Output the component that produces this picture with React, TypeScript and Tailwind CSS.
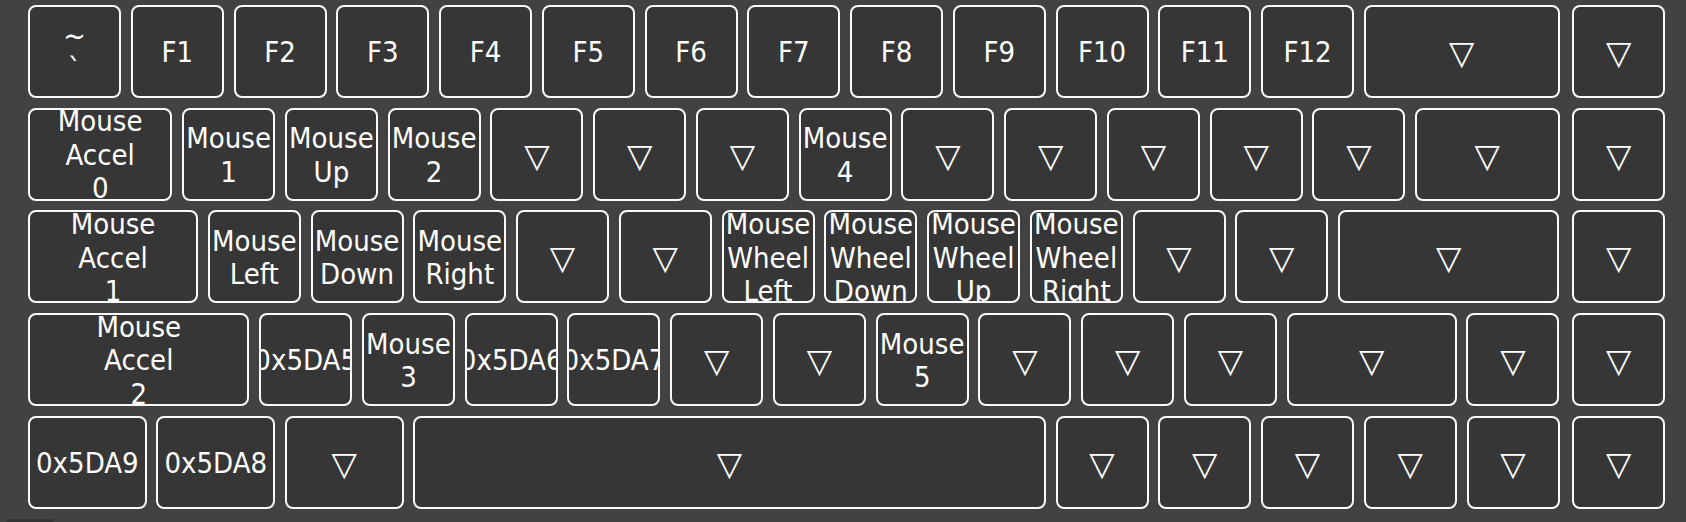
import React from "react";

type K = { l?: string[]; w?: string; last?: boolean };

const KW: Record<string, string> = {
  "1": "w-[93px]",
  "1.25": "w-[118.69px]",
  "1.5": "w-[144.38px]",
  "1.75": "w-[170.06px]",
  "2": "w-[195.75px]",
  "2.25": "w-[221.44px]",
  "6.25": "w-[632.44px]",
};

const t = (s: string): K => ({ l: s.split(" ") });
const tri = (w = "1", last = false): K => ({ w, last });

const rows: K[][] = [
  [
    { l: ["~", "`"] },
    t("F1"), t("F2"), t("F3"), t("F4"), t("F5"), t("F6"),
    t("F7"), t("F8"), t("F9"), t("F10"), t("F11"), t("F12"),
    tri("2"), tri("1", true),
  ],
  [
    { l: ["Mouse", "Accel", "0"], w: "1.5" },
    t("Mouse 1"), t("Mouse Up"), t("Mouse 2"),
    tri(), tri(), tri(),
    t("Mouse 4"),
    tri(), tri(), tri(), tri(), tri(),
    tri("1.5"), tri("1", true),
  ],
  [
    { l: ["Mouse", "Accel", "1"], w: "1.75" },
    t("Mouse Left"), t("Mouse Down"), t("Mouse Right"),
    tri(), tri(),
    t("Mouse Wheel Left"), t("Mouse Wheel Down"), t("Mouse Wheel Up"), t("Mouse Wheel Right"),
    tri(), tri(),
    tri("2.25"), tri("1", true),
  ],
  [
    { l: ["Mouse", "Accel", "2"], w: "2.25" },
    t("0x5DA5"), t("Mouse 3"), t("0x5DA6"), t("0x5DA7"),
    tri(), tri(),
    t("Mouse 5"),
    tri(), tri(), tri(),
    tri("1.75"), tri(), tri("1", true),
  ],
  [
    { l: ["0x5DA9"], w: "1.25" },
    { l: ["0x5DA8"], w: "1.25" },
    tri("1.25"),
    tri("6.25"),
    tri(), tri(), tri(), tri(), tri(), tri("1", true),
  ],
];

function Key({ k }: { k: K }) {
  const w = KW[k.w ?? "1"];
  const tilde = k.l && k.l[0] === "~";
  return (
    <div
      className={
        "h-[93px] shrink-0 rounded-[8px] border-2 border-[#fafafa] bg-[#363636] overflow-hidden flex flex-col items-center justify-center text-white " +
        w +
        (k.last ? " ml-[3px]" : "")
      }
    >
      {k.l ? (
        <div className="flex flex-col items-center pt-[3px]">
          {k.l.map((s, i) => (
            <div
              key={i}
              className={
                "whitespace-nowrap " +
                (tilde ? "text-[30px] leading-[34px]" : "text-[29px] leading-[33.5px]")
              }
            >
              {s}
            </div>
          ))}
        </div>
      ) : (
        <span className="whitespace-nowrap text-[33px] leading-none font-['DejaVu_Sans',sans-serif] [font-stretch:normal] pt-[2px]">
          ▽
        </span>
      )}
    </div>
  );
}

export default function App() {
  return (
    <div className="w-full h-[522px] bg-[#424242] overflow-hidden flex flex-col font-['DejaVu_Sans_Condensed','DejaVu_Sans',sans-serif] [font-stretch:condensed]">
      <div className="flex flex-col gap-[9.75px] pl-[28px] pt-[4.75px]">
        {rows.map((r, i) => (
          <div key={i} className="flex gap-[9.75px]">
            {r.map((k, j) => (
              <Key key={j} k={k} />
            ))}
          </div>
        ))}
      </div>
      <div className="ml-[7px] mt-[10.5px] w-[46px] h-[4px] bg-[#333333]" />
    </div>
  );
}
